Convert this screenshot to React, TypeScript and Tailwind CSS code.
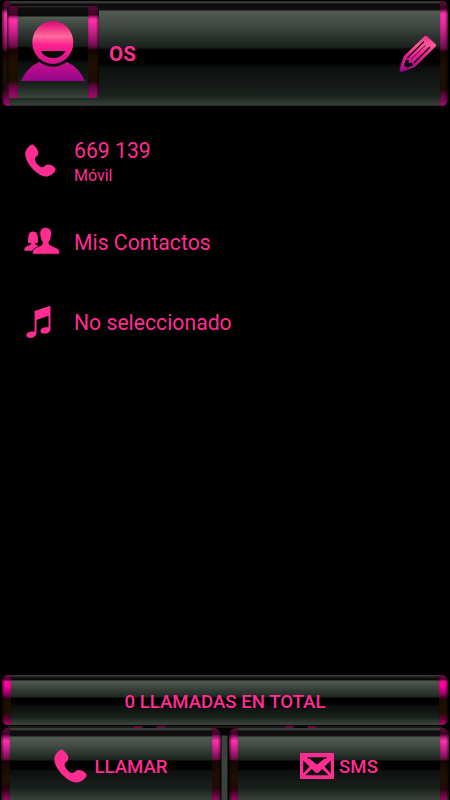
import type { ReactNode } from "react";

const PhoneIcon = ({ className }: { className: string }) => (
  <svg viewBox="0 0 32 34" className={className} fill="currentColor" preserveAspectRatio="none">
    <path d="M7.200.500C8.400.200 10.400 2.300 12.200 4.800c1.900 2.700 2.200 5.100.8 6.900-1.200 1.500-2.800 2.200-2.700 4 .2 3.200 4 7.700 7.200 8.300 2.100.4 2.700-1.800 4.600-2.600 2.200-.9 5.400-.2 7.800 2.100 1.900 1.800 2.200 2.700 1.100 4.300-2 3.200-5.400 5.700-9.200 5.700C13.700 33.500.5 20.300.3 10.200.3 6.300 3.700 1.500 7.200.500z" />
  </svg>
);

const PeopleIcon = () => (
  <svg viewBox="0 0 36 28" className="h-7 w-9" fill="currentColor">
    <path d="M4.200 15.800c-.6-2 .1-6 .6-8.200C5.400 5.300 7 4.400 9.200 4.400s3.600 1.100 4.100 3.200c.5 2 1.100 6.200.6 8.200-1 .3-2.800.2-2.800.9.2 1.200 2 1.600 4.200 2.600-2.800 1.600-5.900 2.400-6.800 4.400H.5c-.5-3.200 1.200-4.100 4-5 1.800-.6 2.700-1.100 2.700-2.100-.6-.5-2.300-.3-3-.8z" />
    <path d="M21.600.4c4 0 6.200 2.700 6.100 6.800 0 2.200-.8 3.500-1.300 5.400-.5 1.500-1.500 2-1.500 3.500.1 3.700 10.800 3.700 10.800 8.700v2.500H8.600v-2.500c0-5 9.900-5 10-8.700 0-1.500-1-2-1.500-3.500-.5-1.900-1.300-3.200-1.300-5.400C15.700 3.100 17.700.4 21.600.4z" stroke="#000" strokeWidth=".8" />
  </svg>
);

const MusicIcon = () => (
  <svg viewBox="0 0 26 34" className="ml-0.5 h-[34px] w-[26px]" fill="currentColor">
    <path d="M8.600 6 24.500.8v23c0 3.100-2.500 4.900-5.600 4.900-2.600 0-4.400-1-4.400-2.800 0-2.600 3.600-4.200 8-3.600V10.800L10.500 14.900v12.700c0 3.500-2.700 5.400-5.900 5.400-2.600 0-4.300-1-4.300-2.700 0-2.700 3.900-4.300 8.300-3.700z" />
  </svg>
);

const MailIcon = () => (
  <svg viewBox="0 0 34 26" className="h-[26px] w-[34px]">
    <rect width="34" height="26" rx="1" fill="#ff2d92" />
    <g fill="#0c100e">
      <path d="M7 4.200h20l-2 2L17 12 9 6.200z" />
      <path d="M3.200 7.500 9.500 13.500l-6.300 7zM30.800 7.500l-6.300 6 6.300 7z" />
      <path d="m5.200 22.300 6.500-6.300 2 1.800c.8.7.5 1.400 1.300 1.400.8 0 1.300 1 2 1s1.200-1 2-1c.8 0 .5-.7 1.300-1.400l2-1.800 6.500 6.300z" />
    </g>
    <path d="M9 6 17 12.500 25 6" fill="none" stroke="#ff2d92" strokeWidth="1.200" />
  </svg>
);

const PencilIcon = () => (
  <svg viewBox="0 0 38 38" className="h-[38px] w-[38px]">
    <defs>
      <linearGradient id="pencil" x1="0" y1="0" x2="0" y2="1">
        <stop offset="0" stopColor="#f52c8d" />
        <stop offset=".25" stopColor="#ff5c9d" />
        <stop offset=".48" stopColor="#f62791" />
        <stop offset="1" stopColor="#95058d" />
      </linearGradient>
    </defs>
    <path
      d="M25.500 1.200c.8-.7 1.700-.7 2.500.1l8.500 7.700c.8.8.8 1.700.1 2.500L17 31c-.7.700-1.500 1-2.500 1.400L4 36.500c-2.300 1-4-.4-3.300-2.700L4 23.200c.3-1 .8-1.900 1.500-2.600z"
      fill="url(#pencil)"
    />
    <path d="M7 24.500 5.200 30.500l3 2.300 5.600-2.300-.5-2.700-3.700.2.200-3z" fill="#060807" />
    <path d="M8.800 22.500 24.500 7M15.300 27.500 30.500 12.500" fill="none" stroke="#16070f" strokeWidth="1.400" strokeLinecap="round" />
    <path d="M12 24.500 26.500 10.200" fill="none" stroke="#4a0f34" strokeWidth="1" strokeLinecap="round" />
  </svg>
);

const Avatar = () => (
  <svg viewBox="0 0 64 60" className="h-[60px] w-16">
    <defs>
      <linearGradient id="face" x1="0" y1="0" x2="0" y2="1">
        <stop offset="0" stopColor="#dc0877" />
        <stop offset=".17" stopColor="#ef3387" />
        <stop offset=".36" stopColor="#ff6c9b" />
        <stop offset=".55" stopColor="#ff218f" />
        <stop offset="1" stopColor="#cf108c" />
      </linearGradient>
      <linearGradient id="torso" x1="0" y1="0" x2="0" y2="1">
        <stop offset="0" stopColor="#c9108c" />
        <stop offset="1" stopColor="#94068b" />
      </linearGradient>
    </defs>
    <ellipse cx="31.800" cy="21.500" rx="20.500" ry="21.500" fill="url(#face)" />
    <path d="M20 30h24.300c-2 4.700-6.800 7-12.200 7-5.300 0-10.100-2.300-12.100-7z" fill="#090b0a" />
    <path d="M0 60c3.500-8.500 10-15.500 18.300-19 8.400 6.300 19.400 6.300 27.500 0C54 44.500 60.600 51.500 64 60z" fill="url(#torso)" />
  </svg>
);

// glossy dark bar used by the header and the buttons
const Bar = ({ className, cap, children }: { className: string; cap: string; children: ReactNode }) => (
  <div className={`flex overflow-hidden ${className}`}>
    <div className={`shrink-0 rounded-l-md ${cap}`}>
      <div className="h-full w-full bg-[linear-gradient(to_right,rgba(0,0,0,0.6)_0,rgba(0,0,0,0.4)_1px,transparent_3px,transparent_80%,rgba(0,0,0,0.15)_100%)]" />
    </div>
    <div className="flex min-w-0 flex-1 items-center">{children}</div>
    <div className={`shrink-0 rounded-r-md ${cap}`}>
      <div className="h-full w-full bg-[linear-gradient(to_left,rgba(0,0,0,0.6)_0,rgba(0,0,0,0.4)_1px,transparent_3px,transparent_80%,rgba(0,0,0,0.15)_100%)]" />
    </div>
  </div>
);

const tallGloss =
  "bg-[linear-gradient(to_bottom,#343635_0,#343635_2px,#0d0a0c_3px,#130f12_9px,#505b51_10px,#414943_24px,#1b211d_46px,#000_49px,#000_62px,#0c0f0e_66px,#19201c_94px,#353e37_104px,#151916_105px)]";
const tallCap =
  "w-2 bg-[linear-gradient(to_bottom,#680739_0,#3b0625_8px,#a81b71_10px,#ff31ae_13px,#d62592_28px,#700d4b_47px,#160506_51px,#211000_66px,#1b0d02_88px,#650646_95px,#a00c68_105px)]";
const avatarGloss =
  "bg-[linear-gradient(to_bottom,#292c2a_0,#101010_2px,#090909_10px,#505b51_11px,#353c37_24px,#151b17_40px,#000_42px,#000_53px,#0c100e_57px,#19211c_79px,#38433b_91px)]";
const avatarCap =
  "w-[11px] bg-[linear-gradient(to_bottom,#5e0738_0,#3b0625_9px,#bf1e80_11px,#ff31ae_14px,#cf218d_25px,#700d4b_40px,#140405_44px,#211000_56px,#1b0d02_75px,#650646_81px,#a00c68_91px)]";
const totalGloss =
  "bg-[linear-gradient(to_bottom,#303432_0,#303432_1px,#110e10_3px,#0d0a0c_5px,#505b51_6px,#333d36_15px,#202721_22px,#000_23px,#000_28px,#0c100e_32px,#17201b_42px,#39433b_49px)]";
const totalCap =
  "w-[9px] bg-[linear-gradient(to_bottom,#85004d_0,#450027_5px,#ff009f_6px,#ff009f_11px,#a80067_18px,#560035_22px,#1b0d02_24px,#211000_38px,#600038_44px,#ac0065_49px)]";
const buttonGloss =
  "bg-[linear-gradient(to_bottom,#3b403d_0,#303432_2px,#100c0e_3px,#130f12_8px,#505b51_9px,#434d45_17px,#1b211d_32px,#000_33px,#000_41px,#0c100e_43px,#19201c_60px,#353e37_71px)]";
const buttonCap =
  "w-[9px] bg-[linear-gradient(to_bottom,#680739_0,#3b0625_6px,#a81b71_9px,#ff31ae_13px,#c82087_21px,#700d4b_31px,#160506_33px,#211000_49px,#24070f_61px,#95055b_71px)]";

const rows = [
  { icon: <PhoneIcon className="ml-px h-[33px] w-[31px]" />, title: "669 139", subtitle: "Móvil" },
  { icon: <PeopleIcon />, title: "Mis Contactos" },
  { icon: <MusicIcon />, title: "No seleccionado" },
];

export default function App() {
  return (
    <div className="flex h-[800px] w-[450px] flex-col overflow-hidden bg-black font-['Roboto',sans-serif] text-[#ff2d92]">
      <header className="px-0.5 pt-px">
        <Bar className={`h-[105px] rounded-md ${tallGloss}`} cap={tallCap}>
          <Bar className={`-ml-[3px] mb-[3px] h-[92px] w-[92px] rounded-[4px] ${avatarGloss}`} cap={avatarCap}>
            <div className="ml-[3px] pb-[3px]">
              <Avatar />
            </div>
          </Bar>
          <h1 className="ml-[10px] text-[20.5px] font-bold leading-6">OS</h1>
          <button className="ml-auto mr-[3px]">
            <PencilIcon />
          </button>
        </Bar>
      </header>

      <main className="flex-1 pt-4">
        {rows.map((row) => (
          <div key={row.title} className="flex h-[80.5px] items-center">
            <div className="flex w-[74px] shrink-0 pb-[3px] pl-6">{row.icon}</div>
            <div>
              <p className="text-[21.2px] leading-7">{row.title}</p>
              {row.subtitle && <p className="text-base leading-[22px]">{row.subtitle}</p>}
            </div>
          </div>
        ))}
      </main>

      <footer>
        <div className="px-0.5">
          <Bar className={`h-[50px] rounded-md ${totalGloss}`} cap={totalCap}>
            <p className="w-full pt-1 text-center text-[18.6px] font-medium leading-6">0 LLAMADAS EN TOTAL</p>
          </Bar>
        </div>
        {/* button lip with the pink glints under the total bar */}
        <div className="mx-2 mt-px flex h-0.5 justify-center gap-[120px] bg-[#181a19]">
          <div className="h-full w-[31px] bg-[linear-gradient(to_right,#75003f_8px,#050505_9px,#050505_22px,#75003f_23px)]" />
          <div className="h-full w-[31px] bg-[linear-gradient(to_right,#75003f_8px,#050505_9px,#050505_22px,#75003f_23px)]" />
        </div>
        <div className="flex justify-between bg-[linear-gradient(to_bottom,#050505_7px,transparent_8px),linear-gradient(to_right,transparent_221px,#39423b_222px,#39423b_227px,transparent_228px)] px-px">
          <Bar className={`h-[72px] w-[220px] rounded-t-lg ${buttonGloss}`} cap={buttonCap}>
            <button className="flex w-full items-center justify-center gap-[7px] pt-1">
              <PhoneIcon className="h-[34px] w-[33px]" />
              <span className="pt-[3px] text-[18.6px] font-medium">LLAMAR</span>
            </button>
          </Bar>
          <Bar className={`h-[72px] w-[220px] rounded-t-lg ${buttonGloss}`} cap={buttonCap}>
            <button className="flex w-full items-center justify-center gap-[5px] pt-[5px]">
              <MailIcon />
              <span className="pt-0.5 text-[18.6px] font-medium">SMS</span>
            </button>
          </Bar>
        </div>
      </footer>
    </div>
  );
}
